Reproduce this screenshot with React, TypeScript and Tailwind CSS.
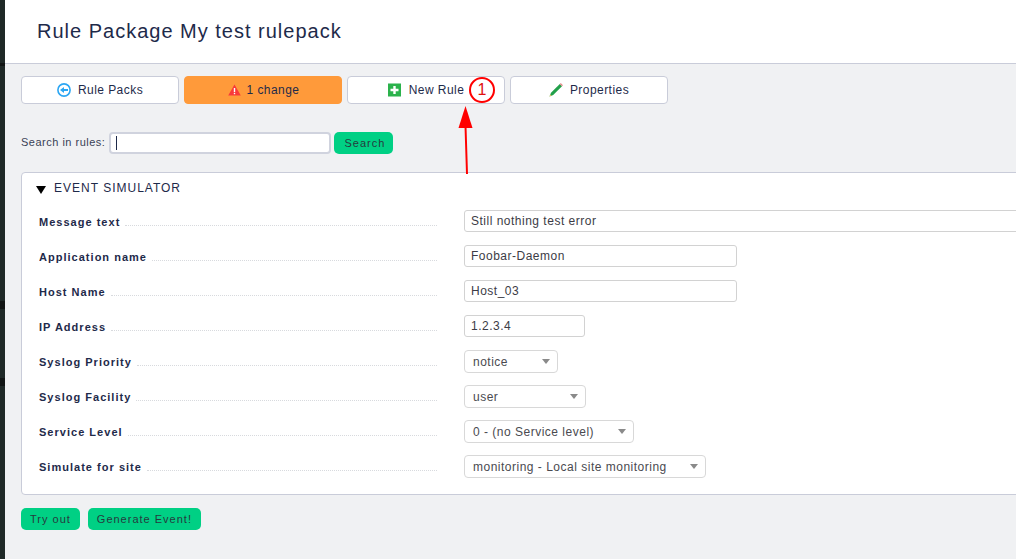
import React from "react";

function Leader({ label, width }: { label: string; width: number }) {
  return (
    <div className="flex items-end overflow-hidden" style={{ width }}>
      <span className="shrink-0 text-[11px] leading-[14px] font-bold tracking-[1.02px] text-[#1e2a4a] pr-[5px]">{label}</span>
      <span className="flex-1 mb-[3px] border-b border-dotted border-[#d8dade]" />
    </div>
  );
}

function TextField({ value, w }: { value: string; w: string }) {
  return (
    <div className={`${w} h-[22px] border border-[#d2d2d2] rounded-[3px] bg-white pl-[6px] text-[12px] leading-[20px] tracking-[0.5px] text-[#3c3c46]`}>{value}</div>
  );
}

function SelectField({ value, w }: { value: string; w: string }) {
  return (
    <div className={`${w} h-[23px] border border-[#d8d8d8] rounded-[4px] bg-white pl-[8px] pr-[5px] flex items-center justify-between text-[12px] tracking-[0.5px] text-[#4a4a50]`}>
      <span>{value}</span>
      <span className="w-0 h-0 border-l-[4px] border-r-[4px] border-t-[5px] border-l-transparent border-r-transparent border-t-[#8a8a8a] mr-[2px]" />
    </div>
  );
}

function Row({ label, children, select }: { label: string; children: React.ReactNode; select?: boolean }) {
  return (
    <div className="h-[35px] flex items-center">
      <div className="pt-[2px]"><Leader label={label} width={398} /></div>
      <div className={`ml-[27px] flex-1 min-w-0 ${select ? "pt-[2px]" : ""}`}>{children}</div>
    </div>
  );
}

function TopButton({ children, orange }: { children: React.ReactNode; orange?: boolean }) {
  return (
    <div className={`w-[158px] h-[28px] rounded-[4px] border flex items-center justify-center gap-[7px] text-[12px] tracking-[0.45px] text-[#1e2a4a] ${orange ? "bg-[#ff9a3a] border-[#ff9a3a]" : "bg-white border-[#c9ccd9]"}`}>
      {children}
    </div>
  );
}

function GreenButton({ children }: { children: React.ReactNode }) {
  return (
    <div className="h-[22px] px-[9px] rounded-[5px] bg-[#00d084] flex items-center text-[11px] tracking-[1px] text-[#263a3e]">{children}</div>
  );
}

export default function App() {
  return (
    <div className="w-[1016px] h-[559px] overflow-hidden flex bg-[#f0f1f3] relative" style={{ fontFamily: '"Liberation Sans", Arial, sans-serif' }}>
      <div className="w-[5px] shrink-0 bg-[#1f2927] flex flex-col">
        <div className="h-[63px]" />
        <div className="h-[3px] bg-[#111514]" />
        <div className="h-[235px]" />
        <div className="h-[8px] bg-[#111514]" />
        <div className="h-[69px]" />
        <div className="h-[8px] bg-[#111514]" />
      </div>
      <div className="flex-1 min-w-0 flex flex-col">
        <div className="h-[64px] shrink-0 bg-white border-b border-[#c9ccd9] pl-[32px] flex items-center text-[20px] tracking-[1px] text-[#1e2a4a] pb-[2px]">
          Rule Package My test rulepack
        </div>
        <div className="pl-[16px]">
          <div className="flex gap-[5px] mt-[12px]">
            <TopButton>
              <svg width="14" height="14" viewBox="0 0 14 14">
                <circle cx="7" cy="7" r="6.1" fill="none" stroke="#2ba6f3" strokeWidth="1.6" />
                <path d="M3 7 L7 4 V6 H11 V8 H7 V10 Z" fill="#2ba6f3" />
              </svg>
              <span>Rule Packs</span>
            </TopButton>
            <TopButton orange>
              <svg width="13" height="12" viewBox="0 0 13 12" className="ml-[1px] -mr-[1px]">
                <path d="M6.5 0.5 L12.8 11.5 H0.2 Z" fill="#f83a3a" />
                <rect x="5.8" y="4" width="1.4" height="4" fill="#fff" />
                <rect x="5.8" y="8.8" width="1.4" height="1.4" fill="#fff" />
              </svg>
              <span>1 change</span>
            </TopButton>
            <TopButton>
              <svg width="14" height="14" viewBox="0 0 14 14">
                <rect width="13" height="13" y="0.5" fill="#2bb24c" />
                <path d="M5.3 3 H7.7 V5.8 H10.5 V8.2 H7.7 V11 H5.3 V8.2 H2.5 V5.8 H5.3 Z" fill="#fff" />
              </svg>
              <span>New Rule</span>
            </TopButton>
            <TopButton>
              <svg width="14" height="14" viewBox="0 0 14 14">
                <path d="M0.5 13.5 L2 9.8 L10.8 1 L13 3.2 L4.2 12 Z" fill="#22a04a" />
                <path d="M0.5 13.5 L1.3 11.5 L2.5 12.7 Z" fill="#e8c15a" />
                <path d="M10.8 1 L11.8 0 L14 2.2 L13 3.2 Z" fill="#e58a8a" />
              </svg>
              <span>Properties</span>
            </TopButton>
          </div>
          <div className="flex items-center mt-[28px] h-[22px]">
            <span className="text-[11px] leading-[14px] tracking-[0.5px] text-[#3a4256] pb-[2px]">Search in rules:</span>
            <div className="ml-[4px] w-[222px] h-[22px] border-2 border-[#d0d3de] rounded-[4px] bg-white pl-[5px] flex items-center">
              <span className="w-px h-[14px] bg-[#1e2a4a]" />
            </div>
            <div className="ml-[3px]"><GreenButton><span className="ml-[1px] -mr-[1px]">Search</span></GreenButton></div>
          </div>
          <div className="mt-[18px] h-[323px] w-[1100px] bg-white border border-[#c9ccd9] rounded-[4px] pl-[17px]">
            <div className="h-[30px] flex items-center">
              <svg width="10" height="8" viewBox="0 0 10 8" className="-ml-[3px] mt-[3px]"><path d="M0 0 H10 L5 8 Z" fill="#000" /></svg>
              <span className="ml-[8px] text-[12px] tracking-[1px] text-[#1e2a4a]">EVENT SIMULATOR</span>
            </div>
            <div>
              <Row label="Message text"><TextField value="Still nothing test error" w="w-[660px]" /></Row>
              <Row label="Application name"><TextField value="Foobar-Daemon" w="w-[273px]" /></Row>
              <Row label="Host Name"><TextField value="Host_03" w="w-[273px]" /></Row>
              <Row label="IP Address"><TextField value="1.2.3.4" w="w-[121px]" /></Row>
              <Row select label="Syslog Priority"><SelectField value="notice" w="w-[94px]" /></Row>
              <Row select label="Syslog Facility"><SelectField value="user" w="w-[122px]" /></Row>
              <Row select label="Service Level"><SelectField value="0 - (no Service level)" w="w-[170px]" /></Row>
              <Row select label="Simulate for site"><SelectField value="monitoring - Local site monitoring" w="w-[242px]" /></Row>
            </div>
          </div>
          <div className="flex gap-[8px] mt-[13px]">
            <GreenButton>Try out</GreenButton>
            <GreenButton>Generate Event!</GreenButton>
          </div>
        </div>
      </div>
      <div className="absolute left-[469px] top-[77px] w-[26px] h-[26px] rounded-full border-2 border-[#ff0000] bg-white flex items-center justify-center text-[16px] text-[#e01010]">1</div>
      <svg className="absolute left-[455px] top-[104px]" width="22" height="72" viewBox="0 0 22 72">
        <path d="M10.5 2 L17.5 24 H3.5 Z" fill="#ff0000" />
        <path d="M10.5 22 L12 70" stroke="#ff0000" strokeWidth="2" fill="none" />
      </svg>
    </div>
  );
}
